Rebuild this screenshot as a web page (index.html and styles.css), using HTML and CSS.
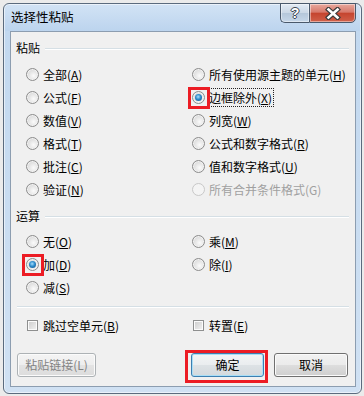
FILE: index.html
```html
<!DOCTYPE html>
<html lang="zh-CN">
<head>
<meta charset="utf-8">
<title>选择性粘贴</title>
<link rel="stylesheet" href="styles.css">
</head>
<body>
<div class="screen">
  <div class="window">
    <div class="titlebar">
      <span class="title">选择性粘贴</span>
      <div class="cap-btns">
        <div class="cap help"><span class="q">?</span></div>
        <div class="cap close">
          <svg width="16" height="13" viewBox="0 0 16 13">
            <path d="M3.5 2.5 L12.5 10.5 M12.5 2.5 L3.5 10.5" stroke="#3b3b3b" stroke-width="5" stroke-linecap="square" fill="none"/>
            <path d="M3.5 2.5 L12.5 10.5 M12.5 2.5 L3.5 10.5" stroke="#ffffff" stroke-width="2.6" stroke-linecap="square" fill="none"/>
          </svg>
        </div>
      </div>
    </div>
    <div class="content">
      <div class="group-head"><span>粘贴</span><i class="rule"></i></div>
      <div class="options">
        <label class="opt"><span class="radio"></span><span>全部(<u>A</u>)</span></label>
        <label class="opt"><span class="radio"></span><span>所有使用源主题的单元(<u>H</u>)</span></label>
        <label class="opt"><span class="radio"></span><span>公式(<u>F</u>)</span></label>
        <label class="opt"><span class="radio checked"><i class="hl"></i></span><span class="focus">边框除外(<u>X</u>)</span></label>
        <label class="opt"><span class="radio"></span><span>数值(<u>V</u>)</span></label>
        <label class="opt"><span class="radio"></span><span>列宽(<u>W</u>)</span></label>
        <label class="opt"><span class="radio"></span><span>格式(<u>T</u>)</span></label>
        <label class="opt"><span class="radio"></span><span>公式和数字格式(<u>R</u>)</span></label>
        <label class="opt"><span class="radio"></span><span>批注(<u>C</u>)</span></label>
        <label class="opt"><span class="radio"></span><span>值和数字格式(<u>U</u>)</span></label>
        <label class="opt"><span class="radio"></span><span>验证(<u>N</u>)</span></label>
        <label class="opt disabled"><span class="radio"></span><span>所有合并条件格式(G)</span></label>
      </div>
      <div class="group-head second"><span>运算</span><i class="rule"></i></div>
      <div class="options ops">
        <label class="opt"><span class="radio"></span><span>无(<u>O</u>)</span></label>
        <label class="opt"><span class="radio"></span><span>乘(<u>M</u>)</span></label>
        <label class="opt"><span class="radio checked"><i class="hl"></i></span><span>加(<u>D</u>)</span></label>
        <label class="opt"><span class="radio"></span><span>除(<u>I</u>)</span></label>
        <label class="opt"><span class="radio"></span><span>减(<u>S</u>)</span></label>
      </div>
      <div class="sep"></div>
      <div class="checks">
        <label class="chk"><span class="box"></span><span>跳过空单元(<u>B</u>)</span></label>
        <label class="chk"><span class="box"></span><span>转置(<u>E</u>)</span></label>
      </div>
      <div class="buttons">
        <div class="btn disabled link">粘贴链接(L)</div>
        <div class="btn default ok">确定<i class="hl-btn"></i></div>
        <div class="btn cancel">取消</div>
      </div>
    </div>
  </div>
</div>
</body>
</html>
```

FILE: styles.css
```css
* { box-sizing: border-box; }
html, body { margin: 0; padding: 0; }
body {
  width: 364px;
  height: 396px;
  overflow: hidden;
  background: #ebebeb;
  font-family: "Noto Sans CJK SC", "Noto Sans", sans-serif;
  font-size: 12px;
  color: #000;
}
.screen {
  width: 364px;
  height: 396px;
  padding: 3px 2px 2px 3px;
}
.window {
  width: 359px;
  height: 391px;
  border: 1px solid #5b6b7e;
  border-radius: 6px;
  box-shadow: inset 0 0 0 1px rgba(255,255,255,0.55);
  background: linear-gradient(to bottom, #d2e3f5 0, #bcd4ee 27px, #c2d8ef 27px, #d0e1f3 100%);
  display: flex;
  flex-direction: column;
  padding: 0 5px 6px 6px;
}
.titlebar {
  height: 27px;
  display: flex;
  align-items: flex-start;
}
.title {
  margin-top: 5px;
  padding-left: 1px;
  line-height: 16px;
  font-size: 12.5px;
  color: #000;
}
.cap-btns {
  margin-left: auto;
  margin-top: -1px;
  display: flex;
}
.cap {
  height: 20px;
  border: 1px solid #4a596b;
  display: flex;
  align-items: center;
  justify-content: center;
  box-shadow: inset 0 0 0 1px rgba(255,255,255,0.45);
}
.help {
  width: 29px;
  border-right: none;
  border-radius: 0 0 0 5px;
  background: linear-gradient(to bottom, #e3ebf4 0%, #cbd8e6 48%, #b5c7da 52%, #c6d7e9 100%);
}
.q {
  font-family: "Liberation Sans", sans-serif;
  font-weight: bold;
  font-size: 14px;
  line-height: 14px;
  color: #fff;
  text-shadow: -1px 0 #3d4652, 1px 0 #3d4652, 0 -1px #3d4652, 0 1px #3d4652;
  margin-top: -1px;
}
.close {
  width: 47px;
  border-radius: 0 0 5px 0;
  background: linear-gradient(to bottom, #e8a89d 0%, #d7796b 45%, #c5452f 52%, #d0604a 100%);
}
.close svg { display: block; }

.content {
  flex: 1;
  border: 1px solid #8c9db0;
  background: #f0f0f0;
  display: flex;
  flex-direction: column;
  padding: 0 6px 9px 5px;
}
.group-head {
  height: 16px;
  margin-top: 8px;
  display: flex;
  align-items: center;
  gap: 5px;
  line-height: 16px;
}
.group-head.second { margin-top: 7px; }
.rule {
  flex: 1;
  height: 1px;
  background: #d5dfe5;
  box-shadow: 0 1px 0 #ffffff;
}
.options {
  margin-top: 7px;
  padding-left: 10px;
  display: grid;
  grid-template-columns: 166px 1fr;
  grid-auto-rows: 23px;
}
.options.ops { margin-top: 6px; }
.opt {
  display: flex;
  align-items: center;
  gap: 4px;
  line-height: 15px;
  white-space: nowrap;
}
u { text-decoration: underline; text-underline-offset: 1px; }
.radio {
  position: relative;
  width: 13px;
  height: 13px;
  flex: none;
  border-radius: 50%;
  border: 1px solid #8c8c8c;
  background: radial-gradient(circle at 60% 62%, #fbfbfb 0, #e8e8e8 40%, #cdcdcd 100%);
  box-shadow: inset 0 0 0 1px #f2f2f2;
}
.radio.checked::after {
  content: "";
  position: absolute;
  left: 2px;
  top: 2px;
  width: 7px;
  height: 7px;
  border-radius: 50%;
  background: radial-gradient(circle at 45% 40%, #a6defc 0, #2c8bcb 45%, #0c4a80 100%);
}
.hl {
  position: absolute;
  left: -5px;
  top: -5px;
  width: 22px;
  height: 22px;
  border: 3px solid #ec1c24;
}
.focus {
  outline: 1px dotted #222;
  outline-offset: 1px;
}
.opt.disabled { color: #a0a0a0; }
.opt.disabled .radio {
  border-color: #c8c8c8;
  background: #f4f4f4;
  box-shadow: none;
}
.sep {
  margin: 7px 0 0 1px;
  height: 1px;
  background: #d5dfe5;
  box-shadow: 0 1px 0 #ffffff;
}
.checks {
  margin-top: 10px;
  height: 16px;
  padding-left: 11px;
  display: grid;
  grid-template-columns: 166px 1fr;
}
.chk {
  display: flex;
  align-items: center;
  gap: 5px;
  line-height: 15px;
}
.box {
  width: 11px;
  height: 11px;
  flex: none;
  border: 1px solid #8e8f8f;
  background: linear-gradient(135deg, #cbcbcb 0%, #f3f3f3 100%);
  box-shadow: inset 0 0 0 1px #fbfbfb;
}
.buttons {
  margin-top: 20px;
  height: 24px;
  padding: 0 1px 0 1px;
  display: flex;
  gap: 10px;
}
.btn {
  position: relative;
  height: 24px;
  border: 1px solid #707070;
  border-radius: 3px;
  display: flex;
  align-items: center;
  justify-content: center;
  line-height: 16px;
  background: linear-gradient(to bottom, #f2f2f2 0%, #ebebeb 48%, #dddddd 52%, #cfcfcf 100%);
  box-shadow: inset 0 0 0 1px #fbfbfb;
}
.btn.link { width: 79px; }
.btn.ok { width: 73px; margin-left: auto; }
.btn.cancel { width: 74px; }
.btn.disabled {
  color: #838383;
  border-color: #adb2b5;
  background: linear-gradient(to bottom, #f4f4f4 0%, #eeeeee 48%, #e3e3e3 52%, #dcdcdc 100%);
}
.btn.default {
  border-color: #3c7fb1;
  background: linear-gradient(to bottom, #f3f5f6 0%, #eaedef 48%, #dde2e5 52%, #d3d9dd 100%);
  box-shadow: inset 0 0 0 1px #a9def6;
}
.hl-btn {
  position: absolute;
  left: -7px;
  top: -4px;
  width: 83px;
  height: 33px;
  border: 3px solid #ec1c24;
}
```
